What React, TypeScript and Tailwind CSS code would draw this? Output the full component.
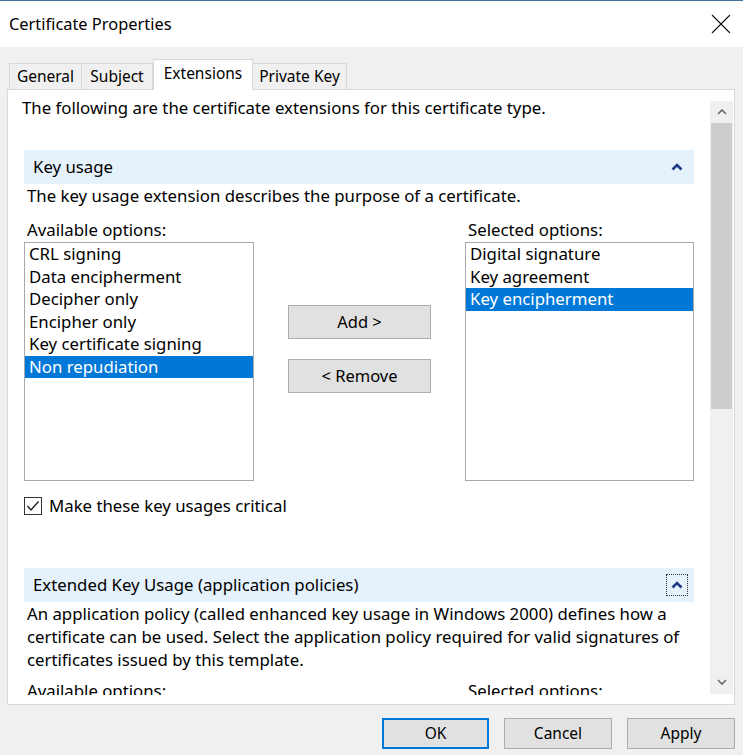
import React from "react";

const font = { fontFamily: '"Noto Sans", "Open Sans", sans-serif' };

function Chevron({ dotted }: { dotted?: boolean }) {
  return (
    <div
      className={
        "w-[22px] h-[22px] flex items-center justify-center " +
        (dotted ? "border border-dotted border-[#333]" : "")
      }
    >
      <svg width="12" height="8" viewBox="0 0 12 8">
        <polyline points="1.5,6.5 6,2 10.5,6.5" fill="none" stroke="#1d3b8b" strokeWidth="2.6" />
      </svg>
    </div>
  );
}

function ListBox({ items, selected }: { items: string[]; selected: number }) {
  return (
    <div className="h-[239px] border border-[#a9a9a9] bg-white">
      {items.map((t, i) => (
        <div
          key={t}
          className={
            "h-[22.5px] leading-[22px] pl-[4px] text-[16.8px] whitespace-nowrap " +
            (i === selected ? "bg-[#0078d7] text-white" : "text-black")
          }
        >
          {t}
        </div>
      ))}
    </div>
  );
}

function Btn({ children }: { children: React.ReactNode }) {
  return (
    <div className="w-[143px] h-[34px] bg-[#e1e1e1] border border-[#adadad] flex items-center justify-center text-[16.5px] text-black">
      {children}
    </div>
  );
}

export default function App() {
  return (
    <div className="w-[743px] h-[755px] bg-[#f0f0f0] flex flex-col overflow-hidden text-black" style={font}>
      <div className="h-px bg-[#41729b]" />
      <div className="h-[46px] bg-white flex items-center justify-between pl-[9px] pr-[12px]">
        <span className="text-[16.4px] leading-none">Certificate Properties</span>
        <svg width="20" height="20" viewBox="0 0 20 20">
          <line x1="1" y1="1" x2="19" y2="19" stroke="#111" strokeWidth="1.1" />
          <line x1="19" y1="1" x2="1" y2="19" stroke="#111" strokeWidth="1.1" />
        </svg>
      </div>

      {/* tabs */}
      <div className="flex items-end pl-[9px] pt-[11px] h-[42px] relative z-10">
        <div className="w-[73px] h-[26px] border border-b-0 border-[#d9d9d9] bg-[#f0f0f0] flex items-center justify-center text-[15.5px]">
          General
        </div>
        <div className="w-[71px] h-[26px] border border-b-0 border-l-0 border-[#d9d9d9] bg-[#f0f0f0] flex items-center justify-center text-[15.5px]">
          Subject
        </div>
        <div className="w-[100px] h-[31px] -mb-px border border-b-0 border-[#d9d9d9] bg-white flex items-start pt-[2px] justify-center text-[15.5px]">
          Extensions
        </div>
        <div className="w-[94px] h-[26px] border border-b-0 border-l-0 border-[#d9d9d9] bg-[#f0f0f0] flex items-center justify-center text-[15.5px]">
          Private Key
        </div>
      </div>

      {/* panel */}
      <div className="ml-[7px] w-[728px] h-[616px] border border-[#d9d9d9] bg-white flex">
        <div className="w-[694px] h-[605px] overflow-hidden pl-[16px]">
          <div className="w-[670px] text-[16.8px]">
            <div className="mt-[8px] -ml-[2px] h-[20px] leading-[20px] whitespace-nowrap">
              The following are the certificate extensions for this certificate type.
            </div>

            <div className="mt-[32px] h-[34px] bg-[#e5f1fb] flex items-center justify-between pl-[9px] pr-[6px]">
              <span>Key usage</span>
              <Chevron />
            </div>
            <div className="mt-[2px] pl-[3px] h-[20px] leading-[20px] whitespace-nowrap">
              The key usage extension describes the purpose of a certificate.
            </div>

            <div className="mt-[14px] flex h-[20px] leading-[20px]">
              <div className="w-[441px] pl-[3px]">Available options:</div>
              <div className="pl-[3px]">Selected options:</div>
            </div>

            <div className="mt-[2px] flex">
              <div className="w-[230px]">
                <ListBox
                  items={[
                    "CRL signing",
                    "Data encipherment",
                    "Decipher only",
                    "Encipher only",
                    "Key certificate signing",
                    "Non repudiation",
                  ]}
                  selected={5}
                />
              </div>
              <div className="w-[211px] pl-[34px] pt-[63px] flex flex-col gap-[20px]">
                <Btn>Add &gt;</Btn>
                <Btn>&lt; Remove</Btn>
              </div>
              <div className="w-[229px]">
                <ListBox items={["Digital signature", "Key agreement", "Key encipherment"]} selected={2} />
              </div>
            </div>

            <div className="mt-[15px] h-[20px] flex items-center gap-[7px]">
              <div className="w-[18px] h-[18px] border border-[#333] flex items-center justify-center">
                <svg width="14" height="12" viewBox="0 0 14 12">
                  <polyline points="1.5,6 5,10 12.5,1.5" fill="none" stroke="#222" strokeWidth="1.4" />
                </svg>
              </div>
              <span className="leading-[20px]">Make these key usages critical</span>
            </div>

            <div className="mt-[52px] h-[34px] bg-[#e5f1fb] flex items-center justify-between pl-[9px] pr-[6px]">
              <span>Extended Key Usage (application policies)</span>
              <Chevron dotted />
            </div>
            <div className="pl-[3px] leading-[23px] whitespace-nowrap">
              <div>An application policy (called enhanced key usage in Windows 2000) defines how a</div>
              <div>certificate can be used. Select the application policy required for valid signatures of</div>
              <div>certificates issued by this template.</div>
            </div>
            <div className="mt-[10px] flex h-[20px] leading-[20px]">
              <div className="w-[441px] pl-[3px]">Available options:</div>
              <div className="pl-[3px]">Selected options:</div>
            </div>
          </div>
        </div>

        {/* scrollbar */}
        <div className="ml-[8px] mt-[11px] w-[23px] h-[593px] bg-[#f0f0f0] flex flex-col items-center">
          <div className="h-[22px] w-full flex items-center justify-center">
            <svg width="10" height="6" viewBox="0 0 10 6">
              <polyline points="1,5 5,1 9,5" fill="none" stroke="#606060" strokeWidth="1.5" />
            </svg>
          </div>
          <div className="w-[21px] h-[286px] bg-[#cdcdcd]" />
          <div className="flex-1" />
          <div className="h-[24px] w-full flex items-center justify-center">
            <svg width="10" height="6" viewBox="0 0 10 6">
              <polyline points="1,1 5,5 9,1" fill="none" stroke="#606060" strokeWidth="1.5" />
            </svg>
          </div>
        </div>
      </div>

      {/* bottom buttons */}
      <div className="mt-[13px] flex justify-end pr-[8px] gap-[15px]">
        <div className="w-[107px] h-[31px] border-2 border-[#0078d7] bg-[#e1e1e1] flex items-center justify-center text-[15.5px]">
          OK
        </div>
        <div className="w-[108px] h-[31px] border border-[#adadad] bg-[#e1e1e1] flex items-center justify-center text-[15.5px]">
          Cancel
        </div>
        <div className="w-[108px] h-[31px] border border-[#adadad] bg-[#e1e1e1] flex items-center justify-center text-[15.5px]">
          Apply
        </div>
      </div>
    </div>
  );
}
